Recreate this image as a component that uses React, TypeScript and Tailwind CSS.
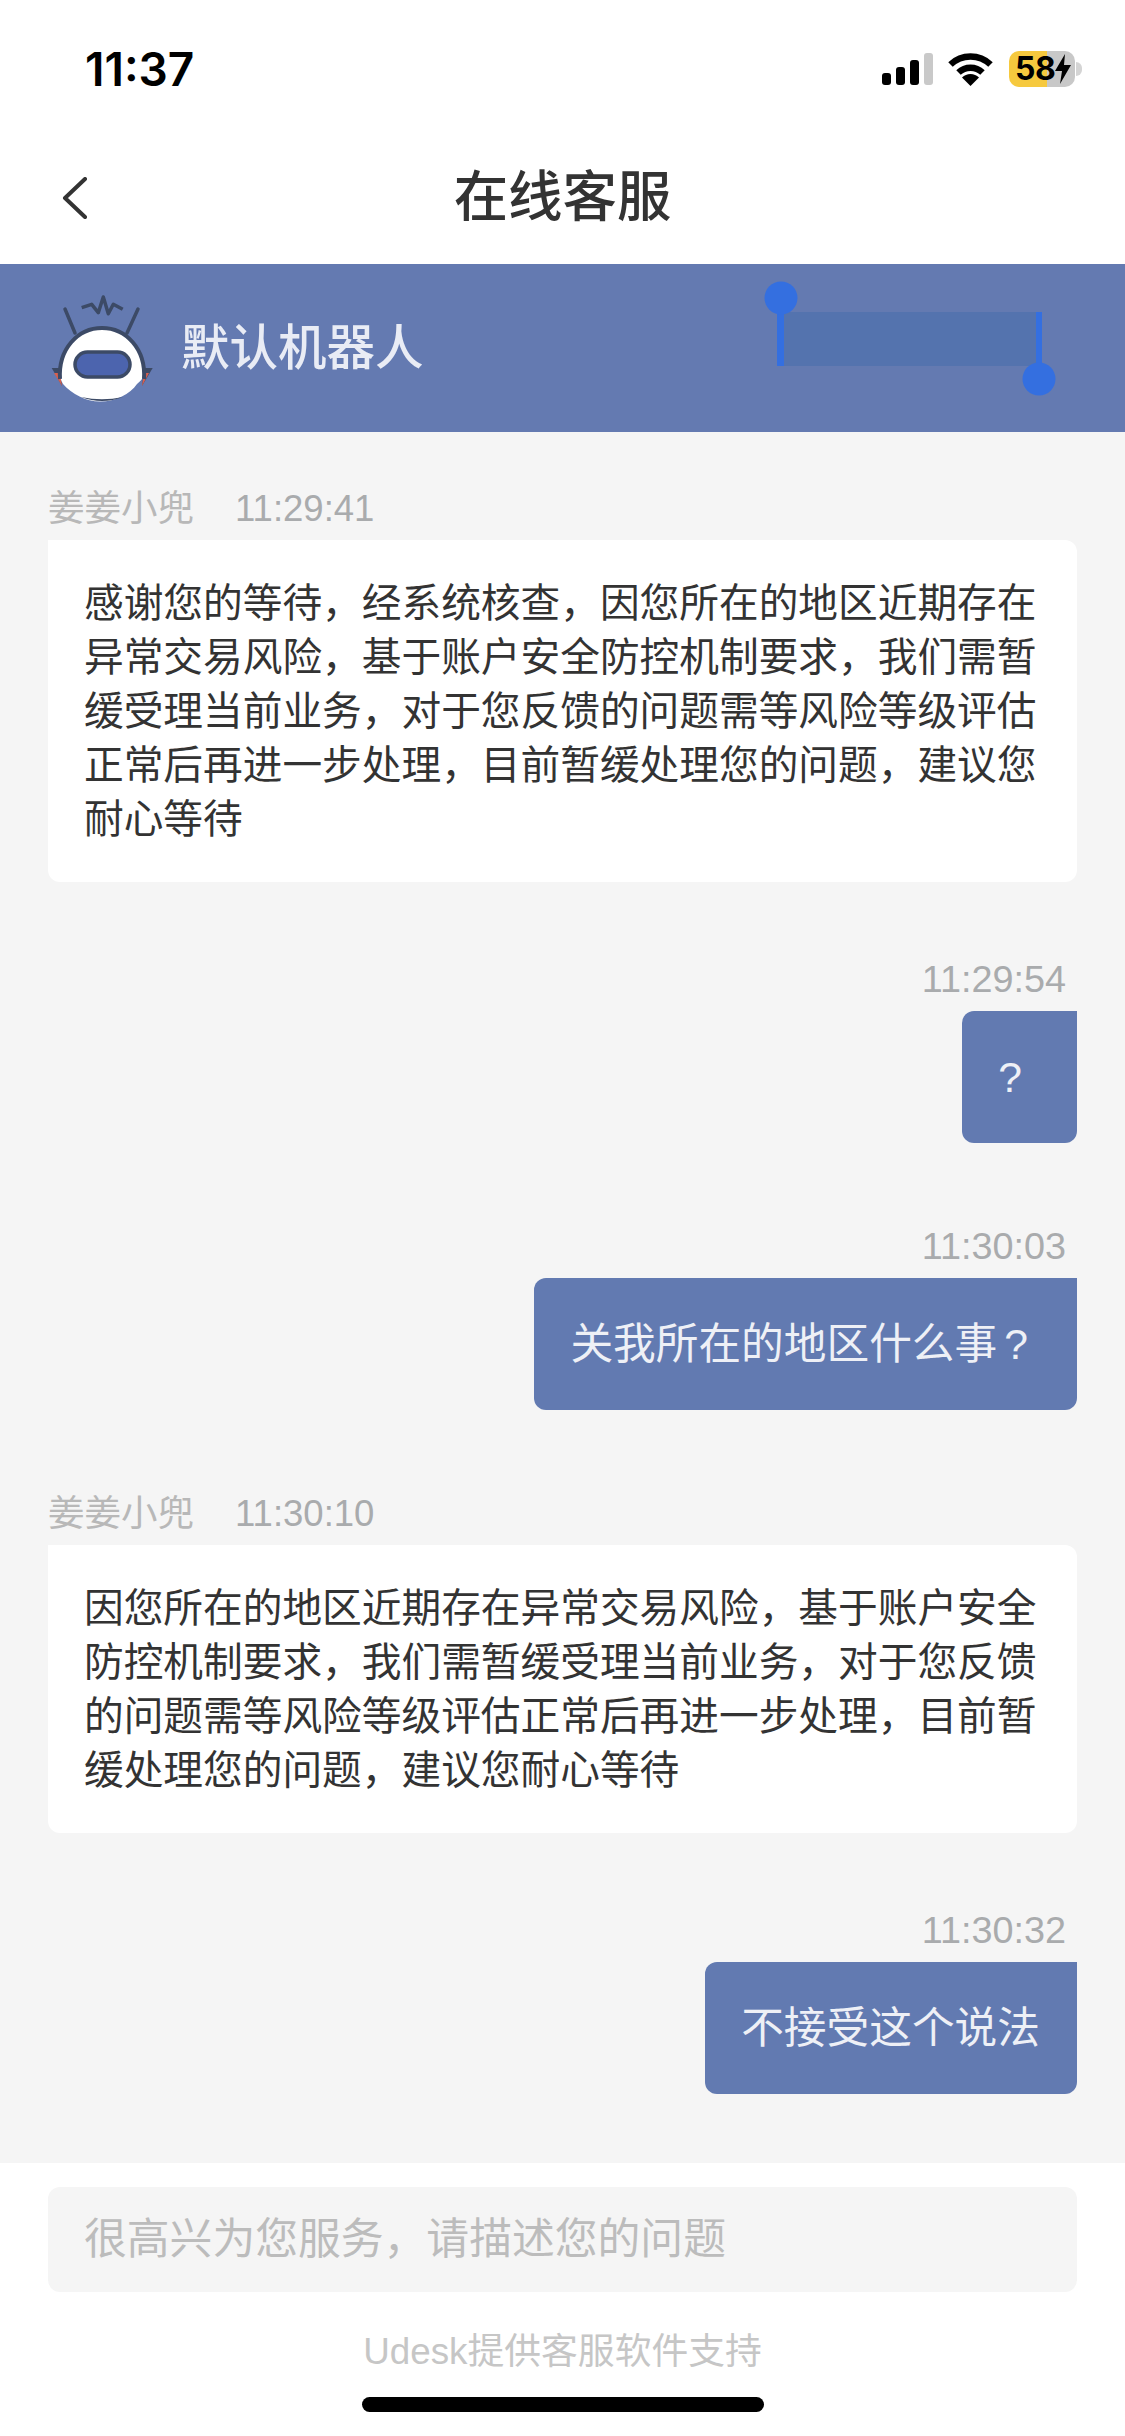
import type { ReactNode } from "react";

const FONT = "font-['Liberation_Sans','Noto_Sans_CJK_SC',sans-serif]";

function StatusIcons() {
  return (
    <div className="flex items-center pr-[43px]">
      <svg width="51" height="32" viewBox="0 0 51 32" className="mr-[15px]">
        <rect x="0" y="20" width="9" height="12" rx="3" fill="#000" />
        <rect x="14" y="14" width="9" height="18" rx="3" fill="#000" />
        <rect x="28" y="7" width="9" height="25" rx="3" fill="#000" />
        <rect x="42" y="0" width="9" height="32" rx="3" fill="#c9c9c9" />
      </svg>
      <svg width="45" height="34" viewBox="0 0 45 34" className="mr-[16px]">
        <path d="M2.5 12.5 A 29 29 0 0 1 42.5 12.5" fill="none" stroke="#000" strokeWidth="6.5" />
        <path d="M10.5 20.5 A 17.5 17.5 0 0 1 34.5 20.5" fill="none" stroke="#000" strokeWidth="6.5" />
        <path d="M22.5 34 L14 25.5 A 12 12 0 0 1 31 25.5 Z" fill="#000" />
      </svg>
      <div className="flex h-[36px] w-[66px] items-center rounded-[10px] bg-[linear-gradient(90deg,#f6c93e_58%,#c8c8c8_58%)] pl-[6px]">
        <span className="font-['Inter',sans-serif] text-[32px] leading-none font-bold tracking-[-0.5px] text-black">58</span>
        <svg width="18" height="30" viewBox="0 0 18 30" className="ml-[-1px]">
          <path d="M11 0 L1 17 H8 L6 30 L17 11 H10 Z" fill="#000" />
        </svg>
      </div>
      <div className="ml-[1px] h-[14px] w-[6px] rounded-r-full bg-[#d4d4d4]" />
    </div>
  );
}

function Robot() {
  return (
    <svg width="108" height="115" viewBox="0 0 108 115" className="shrink-0">
      <path d="M3.7 77 L12 77 L14 95 Z" fill="#3c4a66" />
      <path d="M6 82 L12 82 L14 95 Z" fill="#d8604f" />
      <path d="M104.7 77 L96 77 L94 95 Z" fill="#3c4a66" />
      <path d="M101 82 L96 82 L94 95 Z" fill="#d8604f" />
      <path d="M17 18 L27 42 M90 18 L79 42" stroke="#3c4a66" strokeWidth="3.5" fill="none" strokeLinecap="round" />
      <path d="M33.7 16.7 L43.7 13.3 L50.3 21.7 L55.3 6 L60.3 22.7 L65.3 13.3 L74.7 18.3" stroke="#3c4a66" strokeWidth="3.5" fill="none" strokeLinejoin="round" />
      <path d="M12 82 C12 56 30 37 54 37 C78 37 96 56 96 82 C96 86 93 90 89 93 C82 103 68 110.6 52 110.6 C38 110.6 24 103 15 93 C13 90 12 86 12 82 Z" fill="#fff" />
      <path d="M12 88 C10 58 30 37 54 37 C78 37 98 58 96 88" fill="none" stroke="#3c4a66" strokeWidth="4" />
      <path d="M33 106 Q54 114 75 106 Q54 110.6 33 106 Z" fill="#3c4a66" />
      <rect x="27" y="61" width="55" height="25" rx="12.5" fill="#4c64ae" stroke="#3c4a66" strokeWidth="3.5" />
    </svg>
  );
}

function LeftMsg({ name, time, text }: { name: string; time: string; text: string }) {
  return (
    <div className="mb-[67px]">
      <div className="flex h-[62px] items-center text-[36.5px] leading-none">
        <span className="mr-[41px] text-[#b8b8b8]">{name}</span>
        <span className="text-[#a9abad]">{time}</span>
      </div>
      <div className="rounded-[12px] rounded-tl-none bg-white py-[36px] pr-[30px] pl-[36px] text-[39.7px] leading-[54px] text-[#333333]">
        {text}
      </div>
    </div>
  );
}

function RightMsg({ time, children, padClass }: { time: string; children: ReactNode; padClass: string }) {
  return (
    <div className="mb-[73px]">
      <div className="flex h-[62px] items-center justify-end pr-[11px] text-[37.8px] leading-none text-[#a9abad]">{time}</div>
      <div className="flex justify-end">
        <div
          className={`flex h-[132px] items-center rounded-[12px] rounded-tr-none bg-[#627ab1] pl-[36px] text-[42.7px] leading-[54px] text-[#eef0f6] ${padClass}`}
        >
          {children}
        </div>
      </div>
    </div>
  );
}

export default function App() {
  return (
    <div className={`${FONT} flex h-[2436px] w-[1125px] flex-col overflow-hidden bg-white`}>
      <div className="flex h-[138px] shrink-0 items-center justify-between pl-[85px]">
        <span className="font-['Inter',sans-serif] text-[46px] leading-none font-semibold text-black">11:37</span>
        <StatusIcons />
      </div>

      <div className="grid h-[126px] shrink-0 grid-cols-[1fr_auto_1fr] pb-[6px]">
        <div className="flex items-center pl-[62px]">
          <svg width="26" height="42" viewBox="0 0 26 42">
            <path d="M23 2 L3 21 L23 40" fill="none" stroke="#333333" strokeWidth="4" strokeLinecap="round" strokeLinejoin="round" />
          </svg>
        </div>
        <div className="flex items-center text-[54.4px] leading-none font-medium text-[#333333]">在线客服</div>
        <div />
      </div>

      <div className="relative flex h-[168px] shrink-0 items-center bg-[#647ab1] pl-[48px]">
        <Robot />
        <span className="ml-[25px] text-[48.5px] leading-none font-medium text-[#e9ecf5]">默认机器人</span>
        <svg width="1125" height="168" viewBox="0 0 1125 168" className="absolute top-0 left-0">
          <rect x="777" y="48" width="265" height="54" fill="#5473ae" />
          <rect x="777" y="34" width="7" height="68" fill="#346fe0" />
          <rect x="1036" y="48" width="6" height="67" fill="#346fe0" />
          <circle cx="781" cy="34" r="16.5" fill="#346fe0" />
          <circle cx="1039" cy="115" r="16.5" fill="#346fe0" />
        </svg>
      </div>

      <div className="min-h-0 flex-1 overflow-hidden bg-[#f5f5f5] px-[48px] pt-[46px]">
        <LeftMsg
          name="姜姜小兜"
          time="11:29:41"
          text="感谢您的等待，经系统核查，因您所在的地区近期存在异常交易风险，基于账户安全防控机制要求，我们需暂缓受理当前业务，对于您反馈的问题需等风险等级评估正常后再进一步处理，目前暂缓处理您的问题，建议您耐心等待"
        />
        <RightMsg time="11:29:54" padClass="pr-[55px]">
          <span>?</span>
        </RightMsg>
        <RightMsg time="11:30:03" padClass="pr-[49px]">
          关我所在的地区什么事<span className="ml-[7px]">?</span>
        </RightMsg>
        <LeftMsg
          name="姜姜小兜"
          time="11:30:10"
          text="因您所在的地区近期存在异常交易风险，基于账户安全防控机制要求，我们需暂缓受理当前业务，对于您反馈的问题需等风险等级评估正常后再进一步处理，目前暂缓处理您的问题，建议您耐心等待"
        />
        <RightMsg time="11:30:32" padClass="pr-[37px]">不接受这个说法</RightMsg>
      </div>

      <div className="flex h-[273px] shrink-0 flex-col items-center bg-white px-[48px] pt-[24px]">
        <div className="flex h-[105px] w-full items-center rounded-[12px] bg-[#f5f5f5] pl-[36px] text-[42.8px] text-[#bcbcbc]">
          很高兴为您服务，请描述您的问题
        </div>
        <div className="mt-[35px] h-[50px] text-[36.8px] leading-[50px] text-[#c6c6c6]">Udesk提供客服软件支持</div>
        <div className="mt-[20px] h-[15px] w-[402px] rounded-full bg-black" />
      </div>
    </div>
  );
}
